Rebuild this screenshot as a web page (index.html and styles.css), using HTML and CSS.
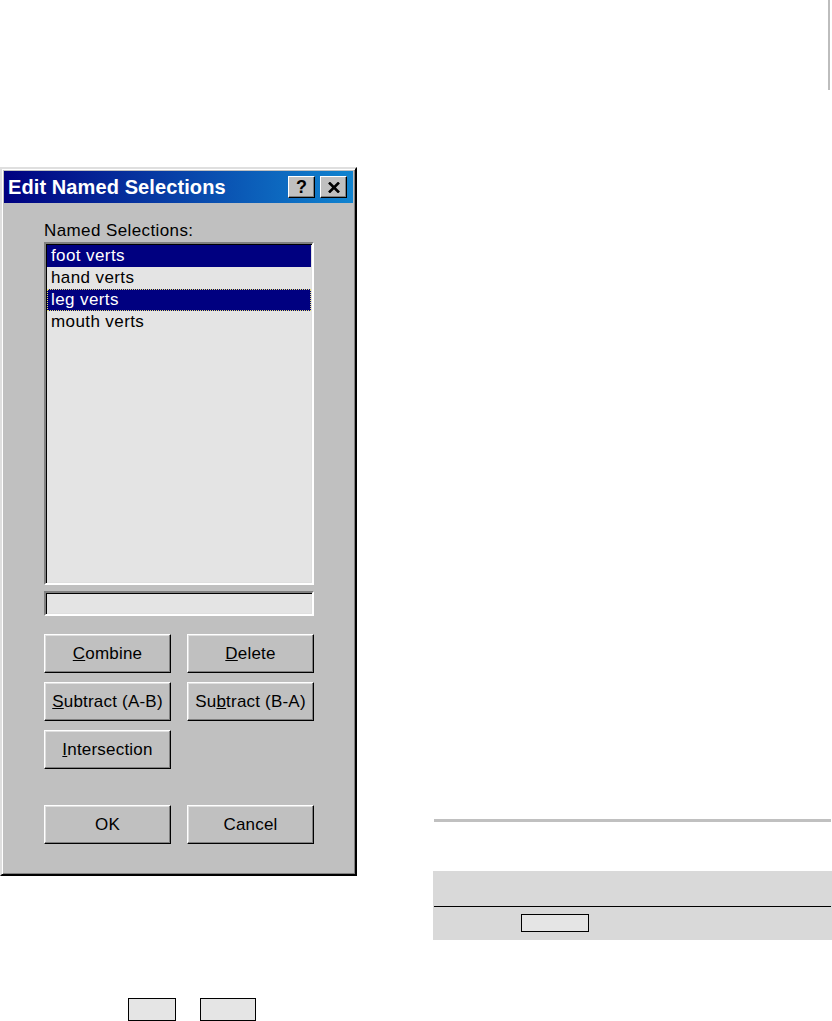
FILE: index.html
```html
<!DOCTYPE html>
<html lang="en">
<head>
    <meta charset="UTF-8">
    <meta name="viewport" content="width=device-width, initial-scale=1.0">
    <title>Edit Named Selections</title>
    <link rel="stylesheet" href="styles.css">
</head>
<body>
    <div class="page">
        <div class="left">
            <div class="dialog">
                <div class="titlebar">
                    <span class="title">Edit Named Selections</span>
                    <div class="title-buttons">
                        <div class="title-btn help">?</div>
                        <div class="title-btn">
                            <svg width="12" height="11" viewBox="0 0 12 11">
                                <path d="M1 0.5 L11 10.5 M11 0.5 L1 10.5" stroke="#000" stroke-width="2.6"/>
                            </svg>
                        </div>
                    </div>
                </div>
                <div class="dialog-body">
                    <div class="label">Named Selections:</div>
                    <div class="listbox">
                        <div class="item selected">foot verts</div>
                        <div class="item">hand verts</div>
                        <div class="item selected focused">leg verts</div>
                        <div class="item">mouth verts</div>
                    </div>
                    <div class="editbox"></div>
                    <div class="button-grid">
                        <button class="btn"><u>C</u>ombine</button>
                        <button class="btn"><u>D</u>elete</button>
                        <button class="btn"><u>S</u>ubtract (A-B)</button>
                        <button class="btn">Su<u>b</u>tract (B-A)</button>
                        <button class="btn"><u>I</u>ntersection</button>
                    </div>
                    <div class="button-row">
                        <button class="btn">OK</button>
                        <button class="btn">Cancel</button>
                    </div>
                </div>
            </div>
            <div class="keys">
                <div class="key small"></div>
                <div class="key"></div>
            </div>
        </div>
        <div class="right">
            <div class="edge-line"></div>
            <div class="rule"></div>
            <div class="table">
                <div class="table-head"></div>
                <div class="table-row">
                    <div class="field"></div>
                </div>
            </div>
        </div>
    </div>
</body>
</html>
```

FILE: styles.css
```css
body {
    margin: 0;
    background-color: #fff;
    font-family: "Liberation Sans", Arial, sans-serif;
    color: #000;
}
.page {
    display: flex;
    height: 1021px;
    overflow: hidden;
}
.left {
    width: 433px;
    padding-top: 167px;
    display: flex;
    flex-direction: column;
}
.dialog {
    width: 357px;
    box-sizing: border-box;
    background-color: #c0c0c0;
    border: 2px solid;
    border-color: #dfdfdf #000 #000 #dfdfdf;
    box-shadow: inset 1px 1px #fff, inset -1px -1px #808080;
    padding: 2px;
}
.titlebar {
    height: 32px;
    background: linear-gradient(to right, #000080, #1084d0);
    display: flex;
    align-items: center;
    justify-content: space-between;
    padding: 0 6px 0 4px;
}
.title {
    color: #fff;
    font-weight: bold;
    font-size: 20px;
    letter-spacing: 0.1px;
}
.title-buttons {
    display: flex;
    gap: 5px;
}
.title-btn {
    width: 27px;
    height: 22px;
    box-sizing: border-box;
    background-color: #c0c0c0;
    border: 1px solid;
    border-color: #fff #000 #000 #fff;
    box-shadow: inset -1px -1px #808080;
    display: flex;
    justify-content: center;
    align-items: center;
    font-weight: bold;
    font-size: 18px;
}
.dialog-body {
    padding: 19px 39px 28px 40px;
}
.label {
    font-size: 17px;
    letter-spacing: 0.4px;
    line-height: 18px;
    margin-bottom: 2px;
}
.listbox {
    height: 343px;
    box-sizing: border-box;
    background-color: #e4e4e4;
    border: 2px solid;
    border-color: #808080 #fff #fff #808080;
    box-shadow: inset 1px 1px #000, inset -1px -1px #dfdfdf;
    padding: 1px 1px 0 1px;
}
.item {
    height: 22px;
    box-sizing: border-box;
    padding-left: 4px;
    font-size: 17px;
    letter-spacing: 0.4px;
    line-height: 22px;
}
.item.selected {
    background-color: #000080;
    color: #fff;
}
.item.focused {
    outline: 1px dotted #e8e070;
    outline-offset: -1px;
}
.editbox {
    height: 25px;
    margin-top: 6px;
    box-sizing: border-box;
    background-color: #e4e4e4;
    border: 2px solid;
    border-color: #808080 #fff #fff #808080;
    box-shadow: inset 1px 1px #000, inset -1px -1px #dfdfdf;
}
.button-grid {
    margin-top: 18px;
    display: grid;
    grid-template-columns: 127px 127px;
    column-gap: 16px;
    row-gap: 9px;
}
.button-row {
    margin-top: 36px;
    display: flex;
    gap: 16px;
}
.btn {
    width: 127px;
    height: 39px;
    box-sizing: border-box;
    background-color: #c0c0c0;
    border: 1px solid;
    border-color: #fff #000 #000 #fff;
    box-shadow: inset -1px -1px #808080, inset 1px 1px #dfdfdf;
    font-family: "Liberation Sans", Arial, sans-serif;
    font-size: 17px;
    letter-spacing: 0.2px;
    color: #000;
    padding: 0;
}
.keys {
    display: flex;
    gap: 24px;
    margin-top: 122px;
    padding-left: 128px;
}
.key {
    width: 56px;
    height: 23px;
    box-sizing: border-box;
    background-color: #e5e5e5;
    border: 1px solid #000;
}
.key.small {
    width: 48px;
}
.right {
    flex: 1;
    display: flex;
    flex-direction: column;
}
.edge-line {
    align-self: flex-end;
    width: 2px;
    height: 90px;
    margin-right: 2px;
    background-color: #bdbdbd;
}
.rule {
    margin: 729px 1px 0 1px;
    height: 3px;
    background-color: #c0c0c0;
}
.table {
    margin-top: 49px;
    height: 69px;
    background-color: #d9d9d9;
}
.table-head {
    height: 35px;
    margin: 0 1px;
    border-bottom: 1px solid #000;
}
.table-row {
    padding: 7px 0 0 88px;
}
.field {
    width: 68px;
    height: 18px;
    box-sizing: border-box;
    background-color: #e5e5e5;
    border: 1px solid #000;
}
```
